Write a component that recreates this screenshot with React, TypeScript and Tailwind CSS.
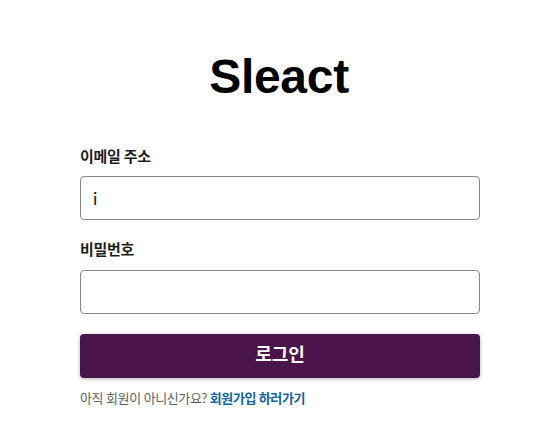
import { useState } from "react";

const kr = "font-['Lato','Noto_Sans_CJK_KR',sans-serif]";

export default function App() {
  const [email, setEmail] = useState("i");
  const [password, setPassword] = useState("");

  return (
    <div className="min-h-[422px] w-full bg-white">
      <header className="pt-[53px] text-center font-['Liberation_Sans',Arial,sans-serif] text-[48px] font-bold leading-[48px] tracking-[-0.3px] text-black">
        Sleact
      </header>

      <form className={`ml-[80px] mt-[43px] w-[400px] ${kr}`} onSubmit={(e) => e.preventDefault()}>
        <label className="block">
          <span className="block text-[15px] font-bold leading-6 tracking-[-0.3px] text-[#1d1c1d]">이메일 주소</span>
          <input
            type="email"
            value={email}
            onChange={(e) => setEmail(e.target.value)}
            className="mt-2 block h-[44px] w-full rounded-[4px] border border-[#868686] px-[12px] text-[18px] text-[#1d1c1d] outline-none"
          />
        </label>

        <label className="mt-[17px] block">
          <span className="block text-[15px] font-bold leading-6 tracking-[-0.3px] text-[#1d1c1d]">비밀번호</span>
          <input
            type="password"
            value={password}
            onChange={(e) => setPassword(e.target.value)}
            className="mt-[9px] block h-[44px] w-full rounded-[4px] border border-[#868686] px-[12px] text-[18px] text-[#1d1c1d] outline-none"
          />
        </label>

        <button
          type="submit"
          className="mt-[20px] block h-[44px] w-full rounded-[4px] bg-[#4a154b] pb-[4px] text-[18px] font-bold text-white shadow-[0_1px_4px_rgba(0,0,0,0.3)]"
        >
          로그인
        </button>
      </form>

      <p className={`ml-[80px] mt-[10px] w-[400px] text-[13px] leading-5 tracking-[-0.4px] text-[#616061] ${kr}`}>
        아직 회원이 아니신가요?{" "}
        <a href="#" className="font-bold text-[#1264a3]">
          회원가입 하러가기
        </a>
      </p>
    </div>
  );
}
